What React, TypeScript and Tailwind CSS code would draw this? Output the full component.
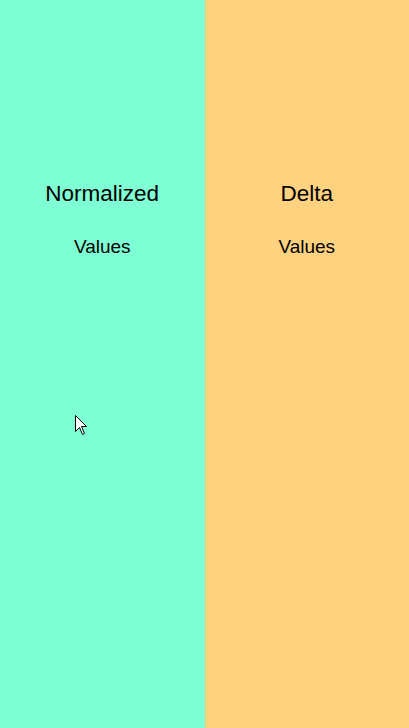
import React from "react";

export default function App() {
  return (
    <div
      className="relative flex h-[728px] w-full text-black"
      style={{ fontFamily: '"Liberation Sans", Arial, sans-serif' }}
    >
      <div className="flex flex-1 flex-col items-center bg-[#7fffd4] pt-[183px]">
        <div className="text-[22.5px] leading-[22.5px]">Normalized</div>
        <div className="mt-[31px] text-[19px] leading-[19px]">Values</div>
      </div>
      <div className="flex flex-1 flex-col items-center bg-[#ffd27f] pt-[183px]">
        <div className="text-[22.5px] leading-[22.5px]">Delta</div>
        <div className="mt-[31px] text-[19px] leading-[19px]">Values</div>
      </div>
      <svg
        className="pointer-events-none absolute left-[75px] top-[415px]"
        width="13"
        height="21"
        viewBox="0 0 13 21"
      >
        <path
          d="M0.5 0.5 L0.5 16.5 L4.5 12.5 L7.5 19.5 L9.5 18.5 L6.5 11.5 L11.5 11.5 Z"
          fill="#fff"
          stroke="#000"
          strokeWidth="1"
          strokeLinejoin="miter"
        />
      </svg>
    </div>
  );
}
